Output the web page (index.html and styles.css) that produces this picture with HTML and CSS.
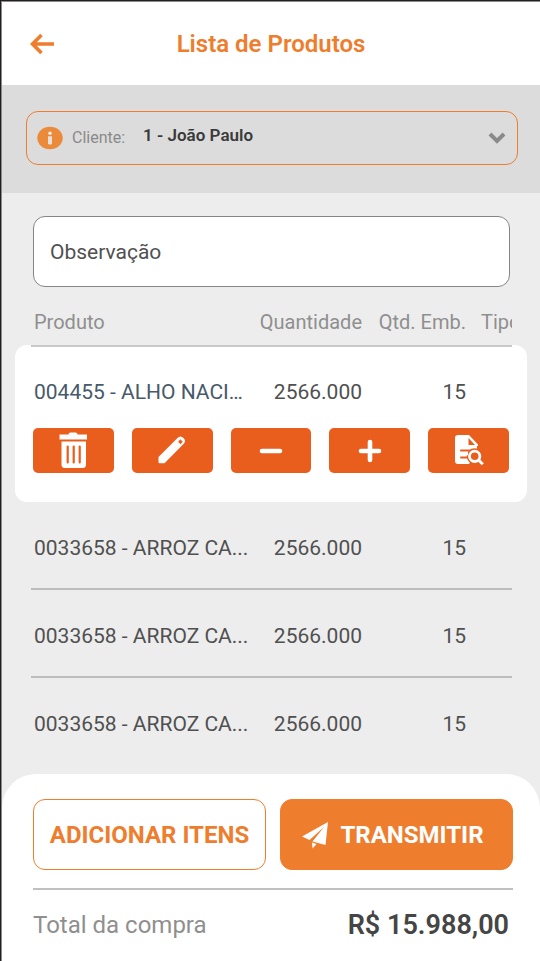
FILE: index.html
```html
<!DOCTYPE html>
<html lang="pt-BR">
<head>
<meta charset="utf-8">
<meta name="viewport" content="width=device-width, initial-scale=1">
<title>Lista de Produtos</title>
<link rel="stylesheet" href="styles.css">
</head>
<body>
<header class="topbar">
  <button class="back" type="button" aria-label="Voltar">
    <svg width="26" height="22" viewBox="0 0 26 22" fill="none" stroke="currentColor" stroke-width="3.600"><path d="M24 11H2.500M11.500 2l-9 9 9 9"/></svg>
  </button>
  <h1 class="title">Lista de Produtos</h1>
</header>

<section class="client-band">
  <div class="client-box">
    <svg class="info" width="26" height="24" viewBox="0 0 26 24"><ellipse cx="13" cy="12" rx="12.700" ry="11.300" fill="#eb8a38"/><circle cx="13" cy="7.300" r="1.800" fill="#eee"/><path d="M11 10.300h4v7.700q-2 1-4 0z" fill="#e4e0dc"/></svg>
    <label class="client-label" for="client">Cliente:</label>
    <select class="client-select" id="client">
      <option>1 - João Paulo</option>
    </select>
    <svg class="chevron" width="18" height="12" viewBox="0 0 18 12" fill="none" stroke="#8a8a8a" stroke-width="4"><path d="m2 2 7 7 7-7"/></svg>
  </div>
</section>

<main class="content">
  <input class="note" type="text" placeholder="Observação" aria-label="Observação">

  <table class="products">
    <colgroup><col><col class="col-qty"><col class="col-pack"><col class="col-type"></colgroup>
    <thead>
      <tr><th scope="col">Produto</th><th scope="col" class="num">Quantidade</th><th scope="col" class="num">Qtd. Emb.</th><th scope="col" class="type"><span class="clip">Tipo</span></th></tr>
    </thead>
    <tbody>
      <tr class="selected"><td>004455 - ALHO NACI…</td><td class="num">2566.000</td><td class="num">15</td><td></td></tr>
      <tr class="actions-row">
        <td colspan="4">
          <div class="actions">
            <button class="action" type="button" aria-label="Excluir">
              <svg width="30" height="38" viewBox="0 1 30 38"><path fill="#fff" d="M1.500 3.500h9q0-2 2-2h5q2 0 2 2h9.500v5H1.500zM3.500 10.500h24.500v23q0 3.500-3.500 3.500H7q-3.500 0-3.500-3.500z"/><path stroke="#e95d1d" stroke-width="2.200" stroke-linecap="round" d="M9.700 15.500v16M15.700 15.500v16M21.700 15.500v16"/></svg>
            </button>
            <button class="action" type="button" aria-label="Editar">
              <svg width="30" height="30" viewBox="0 1 30 30"><path fill="#fff" d="M1.500 22 20.500 3q3-3 6 0 3 3 0 6L7.500 28.300h-5q-1 0-1-1z"/><path fill="#e95d1d" d="m23.500 4.200 2.200 2.500-2.200 2.500-2.400-2.500z"/></svg>
            </button>
            <button class="action" type="button" aria-label="Diminuir">
              <svg width="24" height="24" viewBox="0 0 24 24" stroke="#fff" stroke-width="4.600" stroke-linecap="round"><path d="M3 12h18"/></svg>
            </button>
            <button class="action" type="button" aria-label="Aumentar">
              <svg width="24" height="24" viewBox="0 0 24 24" stroke="#fff" stroke-width="4.600" stroke-linecap="round"><path d="M3 12h18M12 3v18"/></svg>
            </button>
            <button class="action" type="button" aria-label="Ver detalhes">
              <svg width="30" height="32" viewBox="0 1 30 32"><path fill="#fff" d="M4 1h11l9 9.500V16l-9 14H4q-3 0-3-3V4q0-3 3-3z"/><path fill="#e95d1d" d="M14.500 4v7H21z"/><circle cx="20.700" cy="22.300" r="8" fill="#e95d1d"/><path stroke="#e95d1d" stroke-width="2" stroke-linecap="round" d="M7 16.500h10M7 23.500h6"/><path stroke="#fff" stroke-width="2.500" d="M6 20h8"/><path stroke="#e95d1d" stroke-width="2" d="M24 12v6"/><circle cx="20.700" cy="22.300" r="5.200" fill="#e95d1d" stroke="#fff" stroke-width="2.800"/><path stroke="#fff" stroke-width="3" d="m24.500 26 4.300 4.300"/></svg>
            </button>
          </div>
        </td>
      </tr>
      <tr class="item"><td>0033658 - ARROZ CA...</td><td class="num">2566.000</td><td class="num">15</td><td></td></tr>
      <tr class="item"><td>0033658 - ARROZ CA...</td><td class="num">2566.000</td><td class="num">15</td><td></td></tr>
      <tr class="item"><td>0033658 - ARROZ CA...</td><td class="num">2566.000</td><td class="num">15</td><td></td></tr>
    </tbody>
  </table>
</main>

<footer class="summary">
  <div class="buttons">
    <button class="btn btn-outline" type="button">ADICIONAR ITENS</button>
    <button class="btn btn-solid" type="button">
      <svg width="28" height="28" viewBox="0 0 28 28" fill="#fff"><path d="M27 1 1 15.500l7.500 3.500L23 6 11.500 20.500 24.500 24z"/><path d="m11 21.500 4.500 1.500-4 4.500z"/></svg>
      TRANSMITIR
    </button>
  </div>
  <div class="total">
    <span class="total-label">Total da compra</span>
    <strong class="total-value">R$ 15.988,00</strong>
  </div>
</footer>
</body>
</html>
```
FILE: styles.css
```css
* {
  box-sizing: border-box;
}

body {
  margin: 0;
  min-height: 100vh;
  display: flex;
  flex-direction: column;
  border: 0 solid #231f20;
  border-width: 1px 0 0 1px;
  padding: 1px 0 0 1px;
  background: #8c8a8b;
  font-family: Roboto, "Liberation Sans", sans-serif;
  color: #505050;
}

button, input, select {
  font-family: inherit;
}

svg {
  display: block;
  flex: none;
}

.topbar {
  display: grid;
  grid-template-columns: 48px 1fr 48px;
  align-items: center;
  height: 83px;
  padding: 0 24px;
  background: #fff;
  color: #ee7d2d;
}

.back {
  padding: 4px;
  border: 0;
  background: none;
  color: inherit;
}

.title {
  margin: 0;
  font-size: 24px;
  line-height: 28px;
  font-weight: 600;
  text-align: center;
}

.client-band {
  padding: 26px 22px 28px 24px;
  background: #dcdcdc;
}

.client-box {
  position: relative;
  display: flex;
  align-items: center;
  height: 54px;
  padding-left: 10px;
  border: 1px solid #ee7d2d;
  border-radius: 12px;
}

.client-label {
  margin-left: 9px;
  padding-bottom: 2px;
  font-size: 16px;
  color: #8a8a8a;
}

.client-select {
  flex: 1;
  min-width: 0;
  height: 48px;
  margin-left: 18px;
  padding: 0 36px 6px 0;
  border: 0;
  appearance: none;
  background: none;
  font-size: 17px;
  font-weight: 600;
  color: #3a3a3a;
}

.chevron {
  position: absolute;
  right: 11px;
  top: 20px;
  pointer-events: none;
}

.content {
  flex: 1;
  padding: 23px 13px 0;
  background: #ededed;
}

.note {
  display: block;
  width: calc(100% - 35px);
  height: 71px;
  margin: 0 17px 0 18px;
  padding: 0 16px;
  border: 1px solid #858585;
  border-radius: 12px;
  background: #fff;
  font-size: 21px;
  color: #505050;
}

.note::placeholder {
  color: #505050;
  opacity: 1;
}

.products {
  width: 100%;
  margin-top: 23px;
  table-layout: fixed;
  border-spacing: 0;
  font-size: 21px;
  line-height: 24px;
}

.col-qty {
  width: 108px;
}

.col-pack {
  width: 104px;
}

.col-type {
  width: 61px;
}

.products th {
  padding: 0 0 11px 19px;
  font-size: 20px;
  font-weight: 400;
  color: #8f8f8f;
  text-align: left;
  white-space: nowrap;
}

.products td {
  padding: 34px 0 30px 19px;
  white-space: nowrap;
}

.products th.num, .products td.num {
  padding-left: 0;
  text-align: right;
}

.products th.type {
  padding: 0 15px 11px 15px;
}

.clip {
  display: block;
  overflow: hidden;
}

.products .selected td {
  padding-top: 35px;
  padding-bottom: 24px;
  background: linear-gradient(#c8c8c8, #c8c8c8) 0 0 / 100% 2px no-repeat #fff;
}

.products .selected td:first-child {
  border-top-left-radius: 12px;
  background-position: 16px 0;
  color: #47596a;
}

.products .selected td:last-child {
  border-top-right-radius: 12px;
  background-size: calc(100% - 15px) 2px;
}

.products .actions-row td {
  padding: 0 18px 29px;
  border-radius: 0 0 12px 12px;
  background: #fff;
}

.actions {
  display: grid;
  grid-template-columns: repeat(5, 1fr);
  gap: 18px;
}

.action {
  display: flex;
  align-items: center;
  justify-content: center;
  height: 45px;
  padding: 0;
  border: 0;
  border-radius: 5px;
  background: #e95d1d;
}

.item {
  background: linear-gradient(#bdbdbd, #bdbdbd) 16px 100% / calc(100% - 31px) 2px no-repeat;
}

.item:last-child {
  background: none;
}

.summary {
  padding: 25px 27px 20px 31px;
  border-radius: 34px 34px 0 0;
  background: #fff;
  box-shadow: 0 -34px 0 #ededed;
  clip-path: inset(0);
}

.buttons {
  display: grid;
  grid-template-columns: 1fr 1fr;
  gap: 14px;
  padding-bottom: 18px;
  border-bottom: 2px solid #c0c0c0;
}

.btn {
  display: flex;
  align-items: center;
  justify-content: center;
  gap: 11px;
  height: 71px;
  padding: 0;
  border: 1px solid #ee7d2d;
  border-radius: 12px;
  font-size: 24px;
  font-weight: 700;
  white-space: nowrap;
}

.btn-outline {
  background: #fff;
  color: #ee7d2d;
}

.btn-solid {
  padding-right: 8px;
  background: #ee7d2d;
  color: #fff;
}

.total {
  display: flex;
  align-items: center;
  justify-content: space-between;
  padding: 19px 4px 0 0;
  line-height: 32px;
}

.total-label {
  font-size: 24px;
  color: #8f8f8f;
}

.total-value {
  font-size: 27px;
  font-weight: 600;
  color: #454545;
}
```
